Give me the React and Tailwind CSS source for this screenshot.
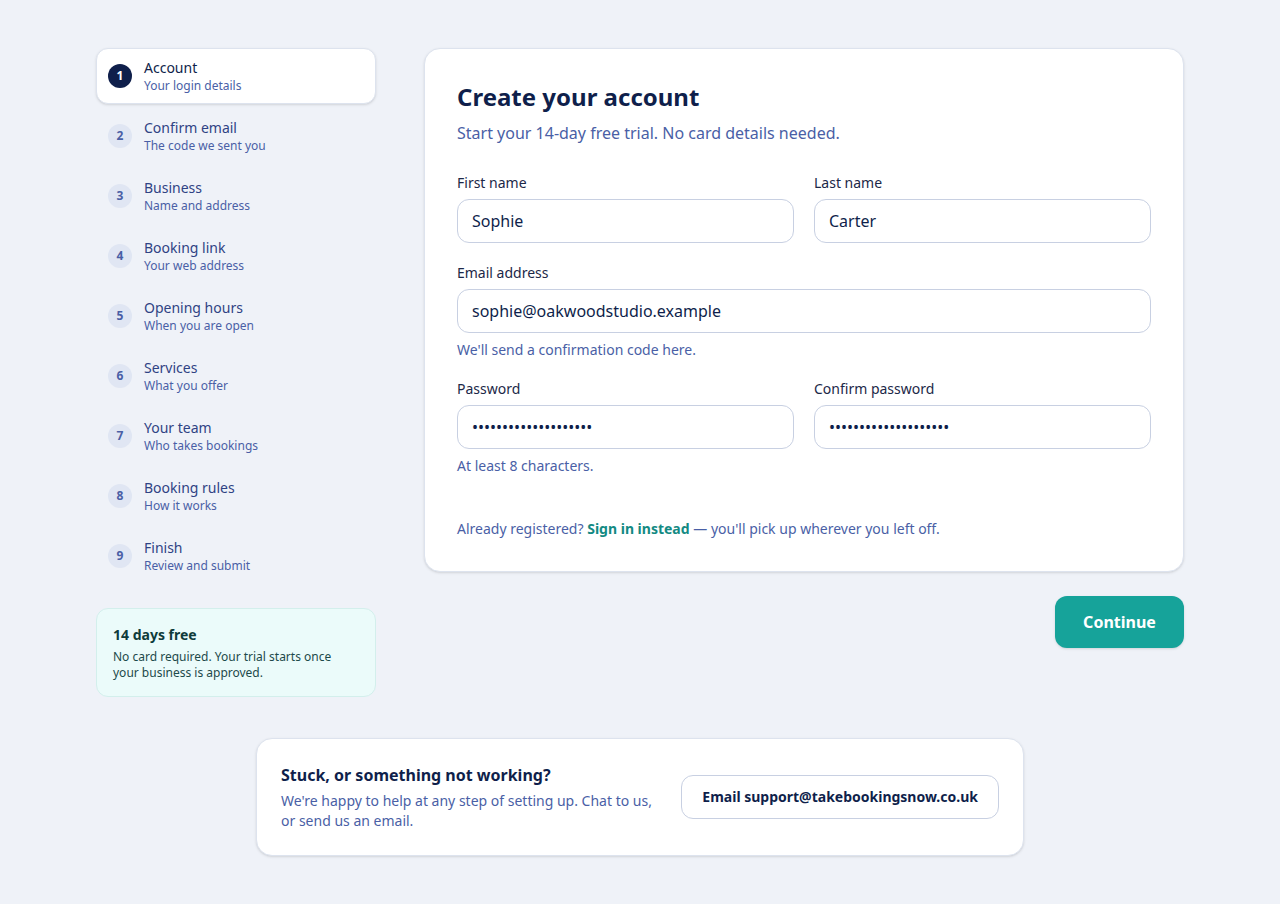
import React from 'react';

const STEPS = [
  { title: 'Account', sub: 'Your login details' },
  { title: 'Confirm email', sub: 'The code we sent you' },
  { title: 'Business', sub: 'Name and address' },
  { title: 'Booking link', sub: 'Your web address' },
  { title: 'Opening hours', sub: 'When you are open' },
  { title: 'Services', sub: 'What you offer' },
  { title: 'Your team', sub: 'Who takes bookings' },
  { title: 'Booking rules', sub: 'How it works' },
  { title: 'Finish', sub: 'Review and submit' },
];

function StepList({ current }) {
  return (
    <ol className="flex flex-col gap-1">
      {STEPS.map((step, i) => {
        const active = i === current;
        return (
          <li
            key={step.title}
            className={`flex items-center gap-3 h-[56px] px-[11px] rounded-xl border ${
              active ? 'bg-white border-[#dde3ee] shadow-sm' : 'border-transparent'
            }`}
          >
            <span
              className={`w-6 h-6 rounded-full flex items-center justify-center text-xs font-bold shrink-0 ${
                active ? 'bg-[#0f1f4b] text-white' : 'bg-[#e0e6f3] text-[#4a5fa6]'
              }`}
            >
              {i + 1}
            </span>
            <div>
              <div className={`text-sm leading-[20px] ${active ? 'text-[#0f1f4b]' : 'text-[#2f4384]'}`}>{step.title}</div>
              <div className="text-xs leading-[16px] text-[#4a5fa6]">{step.sub}</div>
            </div>
          </li>
        );
      })}
    </ol>
  );
}

function Field({ label, value, type = 'text', hint }) {
  return (
    <label className="flex flex-col">
      <span className="text-sm text-[#1c2848] leading-[20px] mb-[6px]">{label}</span>
      <input
        type={type}
        defaultValue={value}
        readOnly
        className="h-[44px] w-full rounded-xl border border-[#c8d0e2] bg-white px-[14px] text-base text-[#0f1f4b] outline-none"
      />
      {hint && <span className="text-sm text-[#4a5fa6] leading-[20px] mt-[7px]">{hint}</span>}
    </label>
  );
}

export default function App() {
  return (
    <div
      className="min-h-screen bg-[#eff2f8] pt-12 pb-12"
      style={{ fontFamily: '"Noto Sans", "Open Sans", sans-serif' }}
    >
      <div className="mx-auto w-[1088px] flex gap-12 items-start">
        <aside className="w-[280px] shrink-0">
          <StepList current={0} />
          <div className="mt-[24px] rounded-xl border border-[#d3efec] bg-[#ebfbfa] px-4 pt-[16px] pb-[15px]">
            <div className="text-sm font-bold text-[#0f3b3b] leading-[20px]">14 days free</div>
            <p className="text-xs text-[#1d4a4a] leading-[16px] mt-[4px]">
              No card required. Your trial starts once your business is approved.
            </p>
          </div>
        </aside>

        <main className="flex-1">
          <section className="bg-white rounded-2xl border border-[#dde3ee] shadow-sm px-8 pt-[32px] pb-[32px]">
            <h1 className="text-2xl font-bold text-[#0f1f4b] leading-[32px]">Create your account</h1>
            <p className="text-base text-[#4a5fa6] mt-[8px] leading-[24px]">
              Start your 14-day free trial. No card details needed.
            </p>

            <div className="mt-[28px] grid grid-cols-2 gap-x-5">
              <Field label="First name" value="Sophie" />
              <Field label="Last name" value="Carter" />
            </div>
            <div className="mt-[20px]">
              <Field label="Email address" value="sophie@oakwoodstudio.example" hint="We'll send a confirmation code here." />
            </div>
            <div className="mt-[19px] grid grid-cols-2 gap-x-5 items-start">
              <Field label="Password" type="password" value="sophiepassword123456" hint="At least 8 characters." />
              <Field label="Confirm password" type="password" value="sophiepassword123456" />
            </div>

            <p className="mt-[43px] text-sm text-[#4a5fa6] leading-[20px]">
              Already registered?{' '}
              <a href="#" className="font-bold text-[#138a83]">Sign in instead</a>{' '}
              — you'll pick up wherever you left off.
            </p>
          </section>

          <div className="flex justify-end mt-[24px]">
            <button className="h-[52px] w-[129px] rounded-xl bg-[#16a39a] text-white text-base font-bold shadow-sm">
              Continue
            </button>
          </div>
        </main>
      </div>

      <div className="mx-auto mt-[41px] w-[768px] bg-white rounded-2xl border border-[#dde3ee] shadow-sm px-6 py-[24px] flex items-center justify-between">
        <div>
          <h2 className="text-base font-bold text-[#0f1f4b] leading-[24px]">Stuck, or something not working?</h2>
          <p className="text-sm text-[#4a5fa6] leading-[20px] mt-[4px] w-[380px]">
            We're happy to help at any step of setting up. Chat to us, or send us an email.
          </p>
        </div>
        <button className="h-[44px] px-5 rounded-xl border border-[#c8d0e2] bg-white text-sm font-bold text-[#0f1f4b]">
          Email support@takebookingsnow.co.uk
        </button>
      </div>
    </div>
  );
}
